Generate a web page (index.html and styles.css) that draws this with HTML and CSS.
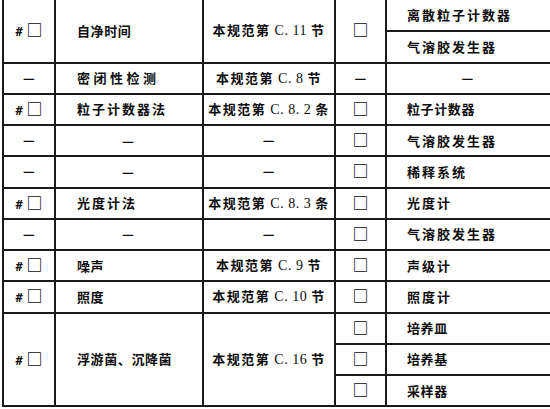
FILE: index.html
```html
<!DOCTYPE html>
<html lang="zh">
<head>
<meta charset="utf-8">
<link rel="stylesheet" href="styles.css">
</head>
<body>
<table class="grid">
  <colgroup>
    <col class="c1"><col class="c2"><col class="c3"><col class="c4"><col class="c5">
  </colgroup>
  <tbody>
    <tr class="first">
      <td rowspan="2" class="mark"><span class="hash">#</span><span class="box">□</span></td>
      <td rowspan="2" class="name tight">自净时间</td>
      <td rowspan="2" class="ref"><span class="zh">本规范第</span> C. 11 <span class="zh">节</span></td>
      <td rowspan="2" class="chk"><span class="box">□</span></td>
      <td class="inst">离散粒子计数器</td>
    </tr>
    <tr><td class="inst">气溶胶发生器</td></tr>
    <tr>
      <td class="mark"><span class="dash">—</span></td>
      <td class="name wide">密闭性检测</td>
      <td class="ref"><span class="zh">本规范第</span> C. 8 <span class="zh">节</span></td>
      <td class="chk"><span class="dash">—</span></td>
      <td class="inst center"><span class="dash">—</span></td>
    </tr>
    <tr>
      <td class="mark"><span class="hash">#</span><span class="box">□</span></td>
      <td class="name">粒子计数器法</td>
      <td class="ref"><span class="zh">本规范第</span> C. 8. 2 <span class="zh">条</span></td>
      <td class="chk"><span class="box">□</span></td>
      <td class="inst tight">粒子计数器</td>
    </tr>
    <tr>
      <td class="mark"><span class="dash">—</span></td>
      <td class="name center"><span class="dash">—</span></td>
      <td class="ref"><span class="dash">—</span></td>
      <td class="chk"><span class="box">□</span></td>
      <td class="inst">气溶胶发生器</td>
    </tr>
    <tr>
      <td class="mark"><span class="dash">—</span></td>
      <td class="name center"><span class="dash">—</span></td>
      <td class="ref"><span class="dash">—</span></td>
      <td class="chk"><span class="box">□</span></td>
      <td class="inst">稀释系统</td>
    </tr>
    <tr>
      <td class="mark"><span class="hash">#</span><span class="box">□</span></td>
      <td class="name">光度计法</td>
      <td class="ref"><span class="zh">本规范第</span> C. 8. 3 <span class="zh">条</span></td>
      <td class="chk"><span class="box">□</span></td>
      <td class="inst">光度计</td>
    </tr>
    <tr>
      <td class="mark"><span class="dash">—</span></td>
      <td class="name center"><span class="dash">—</span></td>
      <td class="ref"><span class="dash">—</span></td>
      <td class="chk"><span class="box">□</span></td>
      <td class="inst">气溶胶发生器</td>
    </tr>
    <tr>
      <td class="mark"><span class="hash">#</span><span class="box">□</span></td>
      <td class="name tight">噪声</td>
      <td class="ref"><span class="zh">本规范第</span> C. 9 <span class="zh">节</span></td>
      <td class="chk"><span class="box">□</span></td>
      <td class="inst">声级计</td>
    </tr>
    <tr>
      <td class="mark"><span class="hash">#</span><span class="box">□</span></td>
      <td class="name tight">照度</td>
      <td class="ref"><span class="zh">本规范第</span> C. 10 <span class="zh">节</span></td>
      <td class="chk"><span class="box">□</span></td>
      <td class="inst">照度计</td>
    </tr>
    <tr>
      <td rowspan="3" class="mark"><span class="hash">#</span><span class="box">□</span></td>
      <td rowspan="3" class="name tight">浮游菌、沉降菌</td>
      <td rowspan="3" class="ref"><span class="zh">本规范第</span> C. 16 <span class="zh">节</span></td>
      <td class="chk"><span class="box">□</span></td>
      <td class="inst tight">培养皿</td>
    </tr>
    <tr>
      <td class="chk"><span class="box">□</span></td>
      <td class="inst tight">培养基</td>
    </tr>
    <tr>
      <td class="chk"><span class="box">□</span></td>
      <td class="inst tight">采样器</td>
    </tr>
  </tbody>
</table>
</body>
</html>
```

FILE: styles.css
```css
html, body {
  margin: 0;
  padding: 0;
  background: #ffffff;
}

body {
  padding-left: 2px;
  font-family: "Liberation Serif", "Noto Sans CJK SC", serif;
  color: #0d0d0d;
}

.grid {
  border-collapse: collapse;
  table-layout: fixed;
  width: 548px;
  font-size: 13px;
}

.c1 { width: 52px; }
.c2 { width: 148px; }
.c3 { width: 132px; }
.c4 { width: 51px; }
.c5 { width: 165px; }

.grid tr {
  height: 31.25px;
}

.grid td {
  border: 2px solid #1a1a1a;
  padding: 0;
  vertical-align: middle;
  white-space: nowrap;
  line-height: 16px;
}

.grid tr.first td {
  border-top: none;
}

.mark, .chk, .ref, .center {
  text-align: center;
}

.name {
  padding-left: 21px !important;
  letter-spacing: 2px;
  font-family: "Noto Sans CJK SC", sans-serif;
  font-weight: 700;
}

.name.center {
  padding-left: 0 !important;
}

.inst {
  padding-left: 20px !important;
  letter-spacing: 2px;
  font-family: "Noto Sans CJK SC", sans-serif;
  font-weight: 700;
}

.inst.center {
  padding-left: 0 !important;
}

.tight { letter-spacing: 0.6px; }
.wide { letter-spacing: 3.5px; }

.ref {
  font-weight: 400;
  font-size: 14px;
  letter-spacing: 0.5px;
}

.ref .zh {
  font-family: "Noto Sans CJK SC", sans-serif;
  font-weight: 700;
  font-size: 13px;
  letter-spacing: 1.5px;
}

.hash {
  font-family: "DejaVu Sans Mono", monospace;
  font-size: 12px;
  font-weight: 700;
  margin-right: 4px;
}

.box {
  font-family: "Noto Sans CJK SC", sans-serif;
  font-size: 16px;
  font-weight: 700;
}

.dash {
  font-family: "Noto Sans CJK SC", sans-serif;
  font-size: 13px;
  font-weight: 700;
}
```
